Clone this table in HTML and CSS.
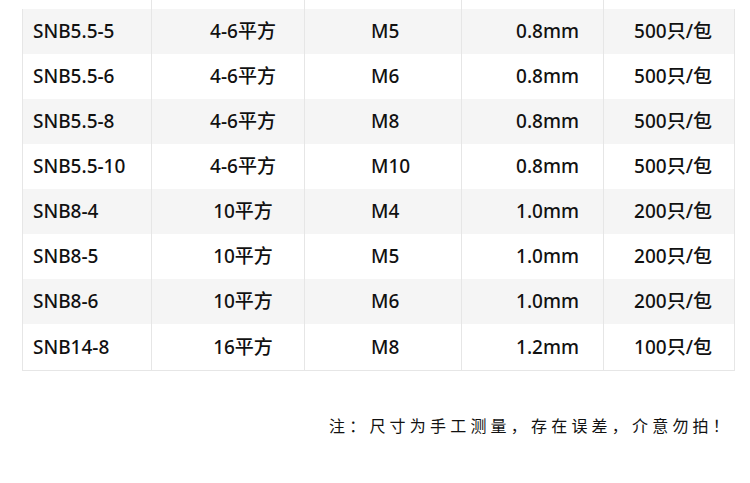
FILE: index.html
```html
<!DOCTYPE html>
<html lang="zh">
<head>
<meta charset="utf-8">
<title>SNB 规格表</title>
<link rel="stylesheet" href="styles.css">
</head>
<body>
<div class="page">
  <div class="table">
    <div class="row stub"><div class="c c1"></div><div class="c c2"></div><div class="c c3"></div><div class="c c4"></div><div class="c c5"></div></div>
    <div class="row alt"><div class="c c1">SNB5.5-5</div><div class="c c2">4-6平方</div><div class="c c3">M5</div><div class="c c4">0.8mm</div><div class="c c5">500只/包</div></div>
    <div class="row"><div class="c c1">SNB5.5-6</div><div class="c c2">4-6平方</div><div class="c c3">M6</div><div class="c c4">0.8mm</div><div class="c c5">500只/包</div></div>
    <div class="row alt"><div class="c c1">SNB5.5-8</div><div class="c c2">4-6平方</div><div class="c c3">M8</div><div class="c c4">0.8mm</div><div class="c c5">500只/包</div></div>
    <div class="row"><div class="c c1">SNB5.5-10</div><div class="c c2">4-6平方</div><div class="c c3">M10</div><div class="c c4">0.8mm</div><div class="c c5">500只/包</div></div>
    <div class="row alt"><div class="c c1">SNB8-4</div><div class="c c2">10平方</div><div class="c c3">M4</div><div class="c c4">1.0mm</div><div class="c c5">200只/包</div></div>
    <div class="row"><div class="c c1">SNB8-5</div><div class="c c2">10平方</div><div class="c c3">M5</div><div class="c c4">1.0mm</div><div class="c c5">200只/包</div></div>
    <div class="row alt"><div class="c c1">SNB8-6</div><div class="c c2">10平方</div><div class="c c3">M6</div><div class="c c4">1.0mm</div><div class="c c5">200只/包</div></div>
    <div class="row last"><div class="c c1">SNB14-8</div><div class="c c2">16平方</div><div class="c c3">M8</div><div class="c c4">1.2mm</div><div class="c c5">100只/包</div></div>
  </div>
  <div class="note">注：尺寸为手工测量，存在误差，介意勿拍！</div>
  <div class="rule"></div>
</div>
</body>
</html>
```

FILE: styles.css
```css
html, body {
  margin: 0;
  padding: 0;
  background: #ffffff;
}
.page {
  width: 750px;
  height: 483px;
  overflow: hidden;
  font-family: "Noto Sans", "Noto Sans CJK SC", sans-serif;
  color: #111111;
}
.table {
  margin-left: 22px;
  width: 713px;
}
.row {
  display: grid;
  grid-template-columns: 129px 153px 157px 142px 132px;
  height: 45px;
  background: #ffffff;
}
.row.alt {
  background: #f5f5f5;
}
.row.stub {
  height: 9px;
}
.c {
  display: flex;
  align-items: center;
  font-size: 19px;
  font-weight: 500;
  line-height: 1;
  white-space: nowrap;
  border-left: 1px solid #e6e6e6;
  box-sizing: border-box;
}
.c5 {
  border-right: 1px solid #e6e6e6;
}
.row.stub .c1 {
  border-left-color: transparent;
}
.row.stub .c5 {
  border-right-color: transparent;
}
.row.last {
  border-bottom: 1px solid #e6e6e6;
  height: 46px;
}
.c1 {
  padding-left: 10px;
}
.c2 {
  justify-content: center;
  padding-left: 30px;
}
.c3 {
  padding-left: 66px;
}
.c4 {
  justify-content: center;
  padding-left: 30px;
}
.c5 {
  justify-content: center;
  padding-left: 8px;
}
.note {
  height: 112px;
  box-sizing: border-box;
  padding-top: 44px;
  padding-left: 329px;
  font-family: "Noto Sans CJK SC", sans-serif;
  font-size: 16px;
  line-height: 20px;
  letter-spacing: 4.2px;
  color: #111111;
  white-space: nowrap;
}
.rule {
  height: 1px;
  background: #e8e8e8;
}
```
